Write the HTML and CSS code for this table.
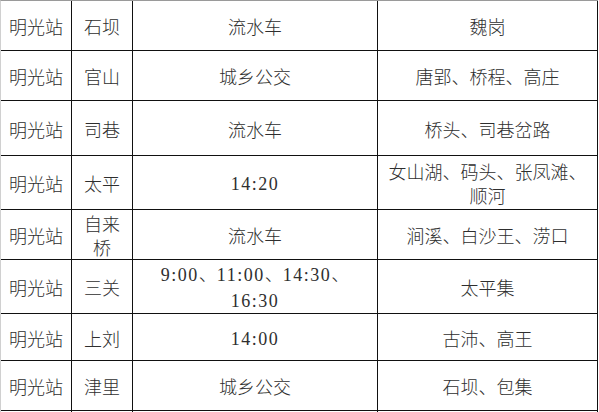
FILE: index.html
```html
<!DOCTYPE html>
<html lang="zh-CN">
<head>
<meta charset="utf-8">
<title>明光站班车</title>
<link rel="stylesheet" href="styles.css">
</head>
<body>
<table class="routes">
  <colgroup>
    <col class="c-station">
    <col class="c-town">
    <col class="c-time">
    <col class="c-via">
  </colgroup>
  <tbody>
    <tr class="r50"><td>明光站</td><td>石坝</td><td>流水车</td><td>魏岗</td></tr>
    <tr class="r50"><td>明光站</td><td>官山</td><td>城乡公交</td><td>唐郢、桥程、高庄</td></tr>
    <tr class="r55"><td>明光站</td><td>司巷</td><td>流水车</td><td>桥头、司巷岔路</td></tr>
    <tr class="r54"><td>明光站</td><td>太平</td><td><span class="num">14:20</span></td><td>女山湖、码头、张凤滩、顺河</td></tr>
    <tr class="r50"><td>明光站</td><td>自来桥</td><td>流水车</td><td>涧溪、白沙王、涝口</td></tr>
    <tr class="r50"><td>明光站</td><td>三关</td><td><span class="num">9:00</span>、<span class="num">11:00</span>、<span class="num">14:30</span>、<span class="num">16:30</span></td><td>太平集</td></tr>
    <tr class="r47"><td>明光站</td><td>上刘</td><td><span class="num">14:00</span></td><td>古沛、高王</td></tr>
    <tr class="r50"><td>明光站</td><td>津里</td><td>城乡公交</td><td>石坝、包集</td></tr>
    <tr class="r-tail"><td></td><td></td><td></td><td></td></tr>
  </tbody>
</table>
</body>
</html>
```

FILE: styles.css
```css
html, body {
  margin: 0;
  padding: 0;
  background: #ffffff;
}

body {
  width: 599px;
  height: 412px;
  overflow: hidden;
}

.routes {
  border-collapse: separate;
  border-spacing: 0;
  table-layout: fixed;
  width: 598px;
  border-top: 1px solid #9a9a9a;
  border-left: 1px solid #d0d0d0;
  font-family: "Noto Sans CJK SC", "Noto Sans", sans-serif;
  font-size: 18px;
  font-weight: 300;
  line-height: 24px;
  color: #2e2e2e;
}

.c-station { width: 71px; }
.c-town { width: 61px; }
.c-time { width: 245px; }
.c-via { width: 220px; }

.routes td {
  border-right: 1px solid #111111;
  border-bottom: 1px solid #111111;
  padding: 1px 5px 0;
  text-align: center;
  vertical-align: middle;
  box-sizing: border-box;
}

.r47 td { height: 47px; }
.r50 td { height: 50px; }
.r54 td { height: 54px; }
.r55 td { height: 55px; }

.r-tail td {
  height: 5px;
  padding: 0;
  border-bottom: 0;
}

.num {
  font-family: "Liberation Serif", "Times New Roman", serif;
  font-weight: 400;
  letter-spacing: 1.5px;
}
```
